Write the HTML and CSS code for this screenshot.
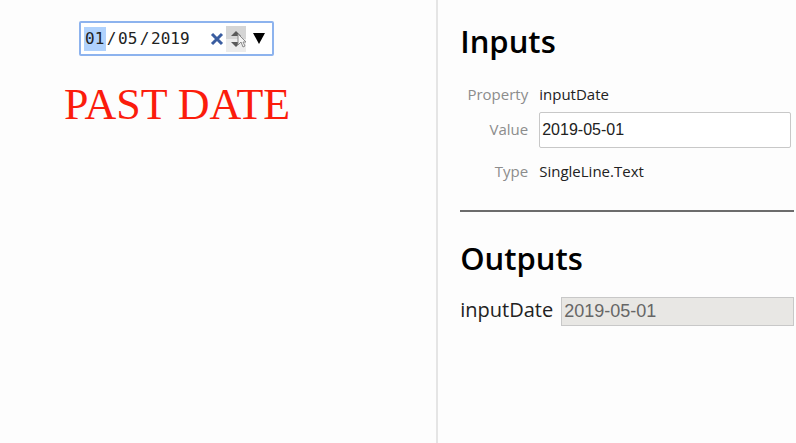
FILE: index.html
```html
<!DOCTYPE html>
<html lang="en">
<head>
<meta charset="utf-8">
<title>Date control</title>
<link rel="stylesheet" href="styles.css">
</head>
<body>
<main class="layout">
  <section class="preview">
    <div class="date-field" role="group" aria-label="Date">
      <input class="segment active" type="text" aria-label="Month" value="01">
      <span class="slash">/</span>
      <input class="segment" type="text" aria-label="Day" value="05">
      <span class="slash">/</span>
      <input class="segment year" type="text" aria-label="Year" value="2019">
      <button class="icon-button clear" type="button" aria-label="Clear">
        <svg width="14" height="14" viewBox="0 0 14 14"><path d="M2 2l10 10M12 2L2 12" fill="none" stroke="#3a5da0" stroke-width="3"/></svg>
      </button>
      <div class="spinner">
        <button class="step up" type="button" aria-label="Increase">
          <svg width="10" height="5" viewBox="0 0 10 5"><path d="M0 5l5-5 5 5z" fill="#5a5a5a"/></svg>
        </button>
        <button class="step down" type="button" aria-label="Decrease">
          <svg width="10" height="5" viewBox="0 0 10 5"><path d="M0 0h10L5 5z" fill="#5a5a5a"/></svg>
        </button>
        <svg class="pointer" width="10" height="16" viewBox="0 0 10 16"><path d="M1 1v11l3-3 2 5 2-1-2-4h3z" fill="#f4f4f4" stroke="#8a8a8a"/></svg>
      </div>
      <button class="icon-button" type="button" aria-label="Open calendar">
        <svg width="12" height="11" viewBox="0 0 12 11"><path d="M0 0h12L6 11z" fill="#000"/></svg>
      </button>
    </div>
    <p class="message">PAST DATE</p>
  </section>
  <aside class="panel">
    <h2>Inputs</h2>
    <div class="properties">
      <span class="name">Property</span>
      <span>inputDate</span>
      <label class="name" for="value">Value</label>
      <input class="value" id="value" type="text" value="2019-05-01">
      <span class="name">Type</span>
      <span>SingleLine.Text</span>
    </div>
    <hr>
    <h2>Outputs</h2>
    <div class="output-row">
      <label for="output">inputDate</label>
      <input class="output" id="output" type="text" value="2019-05-01" disabled>
    </div>
  </aside>
</main>
</body>
</html>
```
FILE: styles.css
```css
* {
  box-sizing: border-box;
}

body {
  margin: 0;
  background: #fdfdfd;
  color: #222;
  font-family: "Open Sans", "Noto Sans", sans-serif;
}

.layout {
  display: flex;
  min-height: 100vh;
}

.preview {
  flex: 1;
  padding: 21px 64px;
}

.date-field {
  display: flex;
  align-items: center;
  width: 195px;
  height: 35px;
  margin-left: 15px;
  padding: 0 7px 0 3px;
  border: 2px solid #8db3ee;
  border-radius: 2px;
  background: #fff;
  font: 16px/24px "DejaVu Sans Mono", monospace;
}

.segment {
  width: 22px;
  height: 24px;
  padding: 0 1px;
  border: 0;
  background: none;
  color: #222;
  font: inherit;
}

.segment.active {
  background: #b0d2fd;
}

.segment.year {
  width: 42px;
}

.slash {
  width: 11px;
  text-align: center;
}

.icon-button,
.step {
  display: flex;
  align-items: center;
  justify-content: center;
  padding: 0;
  border: 0;
  background: none;
}

.clear {
  margin: 0 2px 0 auto;
}

.spinner {
  position: relative;
  width: 20px;
  margin-right: 7px;
  background: #ececec;
}

.step {
  width: 100%;
  height: 13px;
}

.up {
  align-items: flex-end;
  padding-bottom: 3px;
  background: #d5d5d5;
}

.down {
  align-items: flex-start;
  padding-top: 3px;
}

.pointer {
  position: absolute;
  top: 7px;
  left: 11px;
}

.message {
  margin: 25px 0 0;
  color: #fb1c0c;
  font: 44px/48px "Liberation Serif", serif;
}

.panel {
  width: 45.2%;
  padding: 17px 2px 0 22px;
  border-left: 2px solid #e5e5e5;
}

h2 {
  margin: 0;
  color: #000;
  font-size: 31px;
  font-weight: 600;
  line-height: 48px;
}

.properties {
  display: grid;
  grid-template-columns: 68px 1fr;
  align-items: center;
  column-gap: 11px;
  margin-top: 17px;
  padding-right: 3px;
  font-size: 15px;
  line-height: 24px;
}

.name {
  color: #8c8c8c;
  text-align: right;
}

.value,
.output {
  min-width: 0;
  border: 1px solid #c8c8c8;
  font-family: "Liberation Sans", sans-serif;
}

.value {
  height: 36px;
  margin: 6px 0 11px;
  padding: 0 2px;
  border-radius: 2px;
  background: #fff;
  color: #222;
  font-size: 16px;
}

.properties label {
  margin-bottom: 7px;
}

hr {
  height: 2px;
  margin: 27px 0 22px;
  border: 0;
  background: #6c6c6c;
}

.output-row {
  display: flex;
  align-items: center;
  gap: 8px;
  margin-top: 14px;
  font-size: 20px;
  line-height: 28px;
}

.output-row label {
  padding-bottom: 2px;
}

.output {
  flex: 1;
  height: 29px;
  padding: 0 2px;
  background: #e8e7e4;
  color: #666;
  font-size: 18px;
}
```
